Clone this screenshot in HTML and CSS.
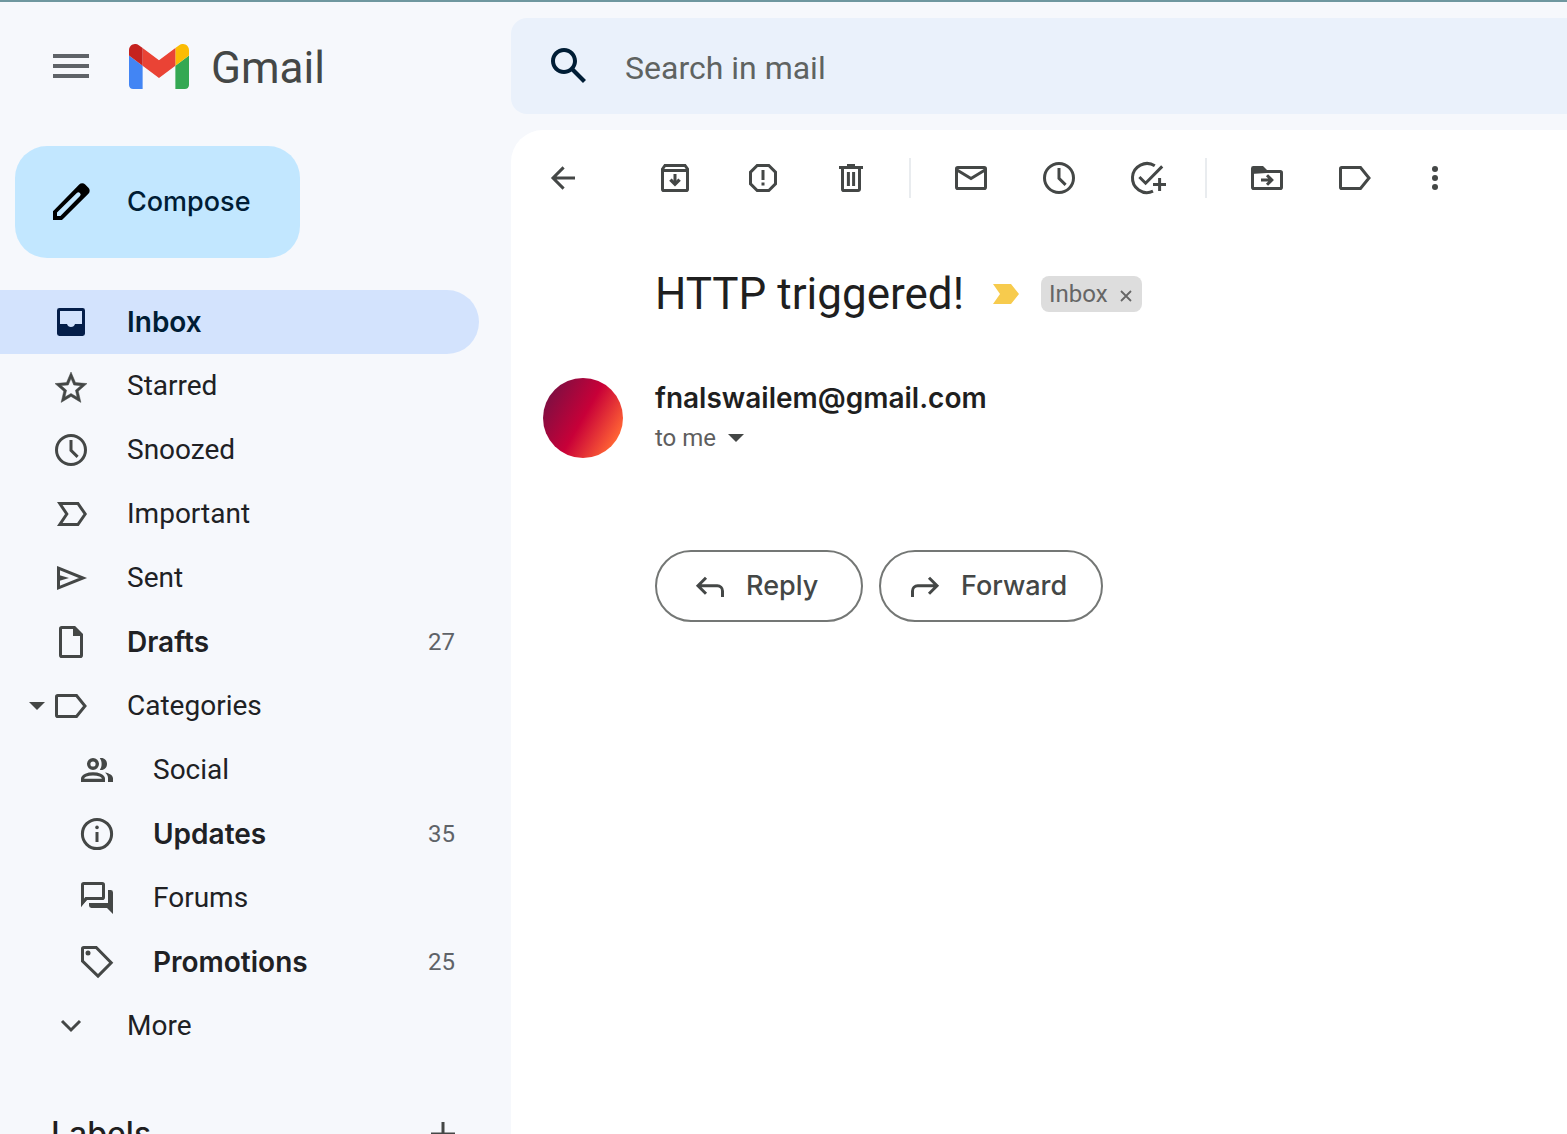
FILE: index.html
```html
<!DOCTYPE html>
<html lang="en">
<head>
<meta charset="utf-8">
<meta name="viewport" content="width=device-width, initial-scale=1">
<title>HTTP triggered! - Gmail</title>
<link rel="stylesheet" href="styles.css">
</head>
<body>
<div class="app">
  <aside class="sidebar">
    <header class="brand">
      <button class="menu-button" type="button" aria-label="Main menu">
        <svg class="icon-large" viewBox="0 0 24 24"><path d="M3 6h18v2H3zM3 11h18v2H3zM3 16h18v2H3z" fill="#5f6368"/></svg>
      </button>
      <a class="logo" href="#">
        <svg class="logo-mark" viewBox="52 42 88 66" aria-hidden="true">
          <path fill="#4285f4" d="M58 108h14V74L52 59v43c0 3.32 2.69 6 6 6"/>
          <path fill="#34a853" d="M120 108h14c3.32 0 6-2.69 6-6V59l-20 15"/>
          <path fill="#fbbc04" d="M120 48v26l20-15v-8c0-7.42-8.47-11.65-14.4-7.2"/>
          <path fill="#ea4335" d="M72 74V48l24 18 24-18v26L96 92"/>
          <path fill="#c5221f" d="M52 51v8l20 15V48l-5.6-4.2c-5.94-4.45-14.4-.22-14.4 7.2"/>
        </svg>
        <span>Gmail</span>
      </a>
    </header>

    <button class="compose" type="button">
      <svg class="icon-large" viewBox="0 0 24 24"><path fill-rule="evenodd" d="M3 16.600V21h4.500L20.700 7.900a2.100 2.100 0 0 0 0-3L19.100 3.300a2.100 2.100 0 0 0-3 0zM5 17.300L14.900 7.500a.9.9 0 0 1 1.600 1.500L6.700 19H5z"/></svg>
      <span>Compose</span>
    </button>

    <nav class="folders" aria-label="Folders">
      <a class="folder active" href="#">
        <svg class="icon" viewBox="0 0 20 20"><path fill="currentColor" fill-rule="evenodd" d="M4.200 3h11.600A1.200 1.200 0 0 1 17 4.200v11.600a1.200 1.200 0 0 1-1.200 1.200H4.200A1.200 1.200 0 0 1 3 15.800V4.200A1.200 1.200 0 0 1 4.200 3zM4.500 4.500V11h3.500a2.100 2.100 0 0 0 4 0h3.500V4.500z"/></svg>
        <span class="name">Inbox</span>
      </a>
      <a class="folder" href="#">
        <svg class="icon" viewBox="0 0 20 20"><path fill="currentColor" stroke="currentColor" stroke-width=".3" transform="translate(.4 1.4) scale(.8)" d="M22 9.240l-7.190-.620L12 2 9.190 8.630 2 9.240l5.460 4.730L5.820 21 12 17.270 18.180 21l-1.630-7.030zM12 15.400l-3.760 2.270 1-4.280-3.320-2.880 4.380-.380L12 6.100l1.710 4.040 4.380.380-3.320 2.880 1 4.280z"/></svg>
        <span class="name">Starred</span>
      </a>
      <a class="folder" href="#">
        <svg class="icon line" viewBox="0 0 20 20"><circle cx="10" cy="10" r="7.250"/><path d="M10 5v5.200l3.300 3.200"/></svg>
        <span class="name">Snoozed</span>
      </a>
      <a class="folder" href="#">
        <svg class="icon line" viewBox="0 0 20 20"><path d="M4.400 4.750h9.050L17.100 10l-3.650 5.250H4.400L7.900 10z"/></svg>
        <span class="name">Important</span>
      </a>
      <a class="folder" href="#">
        <svg class="icon line" viewBox="0 0 20 20"><path d="M3.750 5.100L16 10 3.750 14.900z"/><path class="solid" d="M3.500 8.400L9 10l-5.500 1.600z"/></svg>
        <span class="name">Sent</span>
      </a>
      <a class="folder unread" href="#">
        <svg class="icon line" viewBox="0 0 20 20"><path d="M5.400 2.750h6.300l3.550 3.550v10.300a.65.65 0 0 1-.65.65H5.400a.65.65 0 0 1-.65-.65V3.400a.65.65 0 0 1 .65-.65z"/><path class="solid" d="M11 2.300h1L15.700 6v1H11z"/></svg>
        <span class="name">Drafts</span>
        <span class="count">27</span>
      </a>
      <a class="folder expandable" href="#">
        <svg class="caret" viewBox="0 0 16 8"><path d="M0 0h16L8 8z" fill="currentColor"/></svg>
        <svg class="icon line" viewBox="0 0 20 20"><path d="M3.400 4.750h9.350L17 10l-4.250 5.250H3.400a.65.65 0 0 1-.65-.65V5.400a.65.65 0 0 1 .65-.65z"/></svg>
        <span class="name">Categories</span>
      </a>
      <a class="folder nested" href="#">
        <svg class="icon line" viewBox="0 0 20 20"><circle cx="8" cy="7" r="2.150" stroke-width="1.700"/><path stroke-width="1.600" d="M2.800 15.200v-.9c0-1.400 2.600-2.400 5.200-2.400s5.200 1 5.200 2.400v.9z"/><path class="solid" d="M11.400 4.100C13.300 3.600 15 5 15 7s-1.700 3.400-3.600 2.900c.6-.8.900-1.700.9-2.900s-.3-2.100-.9-2.900zM14 11.200c2.200.4 4 1.400 4 2.900V16h-2.500v-2c0-1.100-.6-2.100-1.500-2.800z"/></svg>
        <span class="name">Social</span>
      </a>
      <a class="folder nested unread" href="#">
        <svg class="icon line" viewBox="0 0 20 20"><circle cx="10" cy="10" r="7.300"/><path d="M10 9v5"/><circle class="solid" cx="10" cy="6.700" r=".9"/></svg>
        <span class="name">Updates</span>
        <span class="count">35</span>
      </a>
      <a class="folder nested" href="#">
        <svg class="icon line" viewBox="0 0 20 20"><path d="M2.750 12.500V3.400a.65.65 0 0 1 .65-.65h9.200a.65.65 0 0 1 .65.650v6.200a.65.65 0 0 1-.65.650H4.500z"/><path class="solid" d="M2 14v-3h3zM15.500 6h1.300A1.200 1.200 0 0 1 18 7.200V18l-3-3H7.200A1.200 1.200 0 0 1 6 13.800v-1.300h9.500z"/></svg>
        <span class="name">Forums</span>
      </a>
      <a class="folder nested unread" href="#">
        <svg class="icon line" viewBox="0 0 20 20"><path d="M3.400 2.750h6.200L17.100 10.400l-6.600 6.650L2.750 9.600V3.400a.65.65 0 0 1 .65-.65z"/><circle class="solid" cx="5.500" cy="5.500" r="1.250"/></svg>
        <span class="name">Promotions</span>
        <span class="count">25</span>
      </a>
      <a class="folder" href="#">
        <svg class="icon line" viewBox="0 0 20 20"><path d="M5.500 7.500L10 12l4.500-4.500"/></svg>
        <span class="name">More</span>
      </a>
    </nav>

    <div class="labels">
      <h2>Labels</h2>
      <button type="button" aria-label="Create new label">
        <svg class="icon line" viewBox="0 0 20 20"><path d="M10 4v12M4 10h12"/></svg>
      </button>
    </div>
  </aside>

  <div class="content">
    <form class="search" role="search">
      <button type="submit" aria-label="Search mail">
        <svg class="icon-large" viewBox="0 0 24 24"><path fill="#001d35" d="M20.490 19l-5.730-5.730C15.530 12.200 16 10.910 16 9.500 16 5.910 13.090 3 9.500 3S3 5.910 3 9.500 5.910 16 9.500 16c1.410 0 2.700-.47 3.770-1.240L19 20.490zM5 9.500C5 7.010 7.010 5 9.500 5S14 7.010 14 9.500 11.990 14 9.500 14 5 11.990 5 9.500"/></svg>
      </button>
      <input type="text" aria-label="Search in mail" placeholder="Search in mail">
    </form>

    <main class="mail">
      <div class="toolbar" role="toolbar" aria-label="Message actions">
        <button class="back" type="button" aria-label="Back to Inbox">
          <svg class="icon line" viewBox="0 0 20 20"><path d="M16 10H5.500M10.300 4.700L5 10l5.300 5.300"/></svg>
        </button>
        <button type="button" aria-label="Archive">
          <svg class="icon line" viewBox="0 0 20 20"><path d="M3.750 5.500L5 3.750h10l1.250 1.750v10.100a.65.65 0 0 1-.65.650H4.400a.65.65 0 0 1-.65-.65zM3.750 6.200h12.500M10 8v5"/><path stroke-width="1.700" d="M7.700 10.800L10 13.100l2.300-2.300"/></svg>
        </button>
        <button type="button" aria-label="Report spam">
          <svg class="icon line" viewBox="0 0 20 20"><path d="M7.100 3.750h5.800l3.350 3.350v5.800l-3.350 3.350H7.100L3.750 12.900V7.100zM10 6v5M10 12.300v1.500"/></svg>
        </button>
        <button type="button" aria-label="Delete">
          <svg class="icon line" viewBox="0 0 20 20"><path d="M4 4.750h12M8 3.750h4M5.750 5v10.600a.65.65 0 0 0 .65.650h7.200a.65.65 0 0 0 .65-.65V5M8.700 7v7M11.300 7v7"/></svg>
        </button>
        <span class="divider"></span>
        <button type="button" aria-label="Mark as unread">
          <svg class="icon line" viewBox="0 0 20 20"><rect x="2.750" y="4.750" width="14.500" height="10.500" rx=".65"/><path d="M3 6l7 4.250L17 6"/></svg>
        </button>
        <button type="button" aria-label="Snooze">
          <svg class="icon line" viewBox="0 0 20 20"><circle cx="10" cy="10" r="7.250"/><path d="M10 5v5.200l3.300 3.200"/></svg>
        </button>
        <button type="button" aria-label="Add to Tasks">
          <svg class="icon line" viewBox="0 0 20 20"><path d="M13.900 3.900A7.250 7.250 0 1 0 13 16.600M6.200 9.500l3.100 3.100 8.300-8.400M16.300 10v6.500M13 13.250h6.500"/></svg>
        </button>
        <span class="divider"></span>
        <button type="button" aria-label="Move to">
          <svg class="icon line" viewBox="0 0 20 20"><rect x="2.750" y="6.750" width="14.500" height="8.500" rx=".65"/><path class="solid" d="M2 8V5.200A1.200 1.200 0 0 1 3.200 4H8l2 2v1.500z"/><path d="M7 11h5.300M10 8.600l2.400 2.400-2.400 2.400"/></svg>
        </button>
        <button type="button" aria-label="Labels">
          <svg class="icon line" viewBox="0 0 20 20"><path d="M3.400 4.750h9.350L17 10l-4.250 5.250H3.400a.65.65 0 0 1-.65-.65V5.400a.65.65 0 0 1 .65-.65z"/></svg>
        </button>
        <button class="overflow" type="button" aria-label="More">
          <svg class="icon" viewBox="0 0 20 20" fill="currentColor"><circle cx="10" cy="5.500" r="1.500"/><circle cx="10" cy="10" r="1.500"/><circle cx="10" cy="14.500" r="1.500"/></svg>
        </button>
      </div>

      <div class="subject">
        <h1>HTTP triggered!</h1>
        <svg class="marker" viewBox="0 0 26 20"><path d="M0 0h18l8 10-8 10H0l7-10z" fill="#f7cb4d"/></svg>
        <span class="chip">Inbox
          <button type="button" aria-label="Remove label Inbox"><svg viewBox="0 0 12 12"><path d="M1 1l10 10M11 1L1 11" fill="none" stroke="#666" stroke-width="1.800"/></svg></button>
        </span>
      </div>

      <div class="sender">
        <span class="avatar"></span>
        <div>
          <h3>fnalswailem@gmail.com</h3>
          <button class="recipient" type="button">to me
            <svg class="caret" viewBox="0 0 16 8"><path d="M0 0h16L8 8z" fill="#444746"/></svg>
          </button>
        </div>
      </div>

      <div class="actions">
        <button class="reply" type="button">
          <svg class="icon line" viewBox="0 0 20 20"><path d="M16.250 15.500v-3a2.600 2.600 0 0 0-2.600-2.600H4.500M8 5.900l-4 4 4 4"/></svg>
          <span>Reply</span>
        </button>
        <button class="forward" type="button">
          <svg class="icon line" viewBox="0 0 20 20"><path d="M3.750 15.500v-3a2.600 2.600 0 0 1 2.600-2.600h9.150M12 5.900l4 4-4 4"/></svg>
          <span>Forward</span>
        </button>
      </div>
    </main>
  </div>
</div>
</body>
</html>
```
FILE: styles.css
```css
* {
  box-sizing: border-box;
}

body {
  margin: 0;
  background: #f6f8fc;
  color: #1f1f1f;
  font-family: Roboto, "Liberation Sans", sans-serif;
  font-size: 28px;
  line-height: 32px;
}

button {
  display: flex;
  align-items: center;
  justify-content: center;
  margin: 0;
  padding: 0;
  border: 0;
  background: none;
  color: #444746;
  font: inherit;
  cursor: pointer;
}

a {
  color: inherit;
  text-decoration: none;
}

h1,
h2,
h3 {
  margin: 0;
}

svg {
  display: block;
  flex: none;
}

.icon {
  width: 40px;
  height: 40px;
  color: #444746;
}

.icon-large {
  width: 48px;
  height: 48px;
}

.line {
  fill: none;
  stroke: currentColor;
  stroke-width: 1.5;
}

.line .solid {
  fill: currentColor;
  stroke: none;
}

.caret {
  width: 16px;
  height: 8px;
  color: #444746;
}

.compose,
.folder.active,
.folder.unread .name,
.labels h2,
.sender h3,
.actions button {
  font-family: Inter, Roboto, sans-serif;
}

.app {
  display: grid;
  grid-template-columns: 511px minmax(0, 1fr);
  height: 100vh;
  overflow: hidden;
  border-top: 2px solid #6f979f;
}

/* Sidebar */

.sidebar {
  display: flex;
  flex-direction: column;
  min-height: 0;
  overflow: hidden;
}

.brand {
  display: flex;
  flex: none;
  align-items: center;
  gap: 34px;
  height: 128px;
  padding-left: 47px;
}

.logo {
  display: flex;
  align-items: center;
  gap: 22px;
  color: #444746;
  font-size: 44px;
  line-height: 48px;
}

.logo span {
  padding-top: 3px;
}

.logo-mark {
  width: 60px;
  height: 45px;
}

.compose {
  flex: none;
  align-self: flex-start;
  justify-content: flex-start;
  gap: 32px;
  width: 285px;
  height: 112px;
  margin: 16px 0 32px 15px;
  padding-left: 32px;
  border-radius: 32px;
  background: #c2e7ff;
  color: #001d35;
  font-size: 27px;
  font-weight: 500;
}

.folders {
  flex: none;
  margin-right: 32px;
}

.folder {
  display: flex;
  align-items: center;
  gap: 36px;
  height: 64px;
  padding: 0 24px 0 51px;
  border-radius: 0 32px 32px 0;
  color: #202124;
}

.folder .name {
  flex: 1;
}

.folder.active {
  background: #d3e3fd;
  color: #001d35;
  font-weight: 600;
}

.folder.active .icon {
  color: #041e49;
}

.folder.unread .name {
  font-weight: 600;
}

.folder.nested {
  padding-left: 77px;
}

.folder.expandable {
  padding-left: 29px;
}

.folder .caret {
  margin-right: -30px;
}

.count {
  color: #5f6368;
  font-size: 24px;
}

.labels {
  display: flex;
  flex: none;
  align-items: center;
  justify-content: space-between;
  margin-top: 56px;
  padding: 0 48px 0 51px;
}

.labels h2 {
  font-size: 32px;
  font-weight: 500;
  line-height: 40px;
}

/* Content */

.content {
  display: flex;
  flex-direction: column;
  min-width: 0;
}

.search {
  display: flex;
  flex: none;
  align-items: center;
  gap: 32px;
  height: 96px;
  margin: 16px 0;
  padding-left: 34px;
  border-radius: 16px 0 0 16px;
  background: #eaf1fb;
}

.search input {
  flex: 1;
  min-width: 0;
  padding: 3px 0 0;
  border: 0;
  outline: 0;
  background: none;
  color: #1f1f1f;
  font: inherit;
  font-size: 32px;
  line-height: 40px;
}

.search input::placeholder {
  color: #5f6361;
  opacity: 1;
}

.mail {
  flex: 1;
  border-radius: 32px 0 0 0;
  background: #fff;
}

.toolbar {
  display: flex;
  align-items: center;
  height: 96px;
  padding-left: 8px;
}

.toolbar button {
  width: 88px;
  height: 88px;
}

.toolbar .back {
  margin-right: 24px;
}

.toolbar .overflow {
  width: 72px;
}

.divider {
  width: 2px;
  height: 40px;
  margin: 0 16px 0 14px;
  background: #e9ecef;
}

.subject {
  display: flex;
  align-items: center;
  gap: 22px;
  padding: 40px 32px 0 144px;
}

.subject h1 {
  font-size: 44px;
  font-weight: 400;
  line-height: 56px;
}

.marker {
  width: 26px;
  height: 20px;
  margin-left: 7px;
}

.chip {
  display: flex;
  align-items: center;
  gap: 12px;
  height: 36px;
  padding: 0 10px 0 8px;
  border-radius: 8px;
  background: #ddd;
  color: #666;
  font-size: 24px;
}

.chip button {
  padding-top: 3px;
}

.chip svg {
  width: 12px;
  height: 12px;
}

.sender {
  display: flex;
  gap: 32px;
  padding: 56px 32px 0;
}

.avatar {
  width: 80px;
  height: 80px;
  border-radius: 50%;
  background: linear-gradient(120deg, #7b0f42 10%, #c80038 50%, #ff6334 86%);
}

.sender h3 {
  font-size: 28px;
  font-weight: 600;
  line-height: 40px;
}

.recipient {
  gap: 12px;
  color: #5e5e5e;
  font-size: 24px;
  line-height: 40px;
}

.actions {
  display: flex;
  gap: 16px;
  padding: 92px 32px 0 144px;
}

.actions button {
  justify-content: flex-start;
  gap: 16px;
  height: 72px;
  border: 2px solid #747775;
  border-radius: 36px;
  font-size: 27px;
  font-weight: 500;
}

.actions .reply {
  width: 208px;
  padding-left: 33px;
}

.actions .forward {
  width: 224px;
  padding-left: 24px;
}
```
